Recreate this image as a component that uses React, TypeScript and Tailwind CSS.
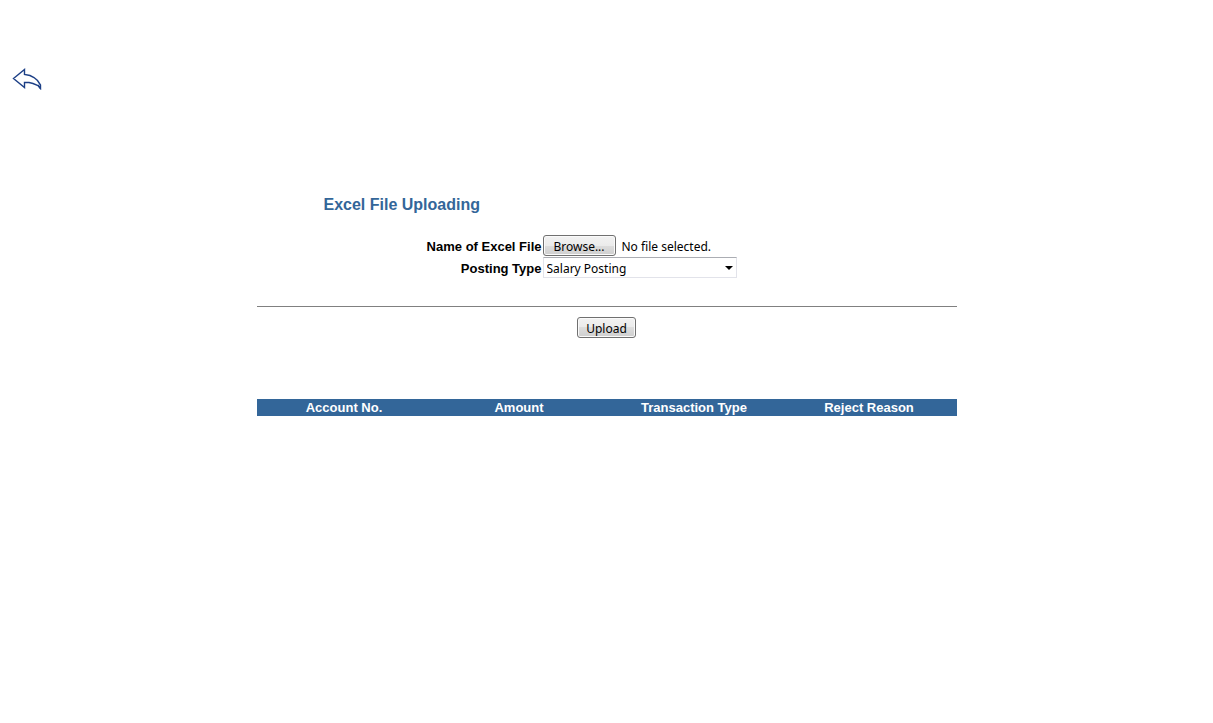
import { useRef, useState } from "react";

const columns = ["Account No.", "Amount", "Transaction Type", "Reject Reason"];

const buttonClass =
  "h-[21px] rounded-[3px] border border-[#707070] bg-[linear-gradient(#f2f2f2,#ebebeb_50%,#dddddd_50%,#cfcfcf)] font-['Noto_Sans',sans-serif] text-[12px] leading-[21px] text-black shadow-[inset_0_0_0_1px_#fafafa]";

const labelClass = "h-[22px] text-right leading-[24px] font-bold";

function BackIcon() {
  return (
    <svg
      width="30"
      height="22"
      viewBox="0 0 30 22"
      fill="none"
      stroke="#1c3f86"
      strokeWidth="1.4"
      aria-hidden="true"
    >
      <path d="M1.5 10.5 L12.5 1.5 V6.5 L18 7.5 L22 9.5 L25.5 12.5 L28.5 17 V20.5 L26 17.5 L21 15.5 L17 14.5 H12.5 V19.5 Z" />
      <path d="M26 17 L28.5 20.5" />
    </svg>
  );
}

export default function App() {
  const fileInput = useRef<HTMLInputElement>(null);
  const [fileName, setFileName] = useState("No file selected.");

  return (
    <div className="min-h-screen bg-white font-['Liberation_Sans',Arial,sans-serif] text-[13px] text-black">
      <header className="px-3 pt-17">
        <a href="#back" aria-label="Back" className="inline-block align-top">
          <BackIcon />
        </a>
      </header>

      <main className="mx-auto w-full max-w-[700px] pt-[103px]">
        <h1 className="pl-[67px] text-[16px] leading-6 font-bold text-[#336699]">
          Excel File Uploading
        </h1>

        <form onSubmit={(event) => event.preventDefault()}>
          <div className="mt-[18px] grid grid-cols-[285px_1fr] gap-x-px">
            <label htmlFor="excel-file" className={labelClass}>
              Name of Excel File
            </label>
            <div className="flex items-start gap-1.5">
              <input
                ref={fileInput}
                id="excel-file"
                type="file"
                accept=".xls,.xlsx"
                className="sr-only"
                onChange={(event) =>
                  setFileName(event.target.files?.[0]?.name ?? "No file selected.")
                }
              />
              <button
                type="button"
                className={`${buttonClass} w-[73px]`}
                onClick={() => fileInput.current?.click()}
              >
                Browse...
              </button>
              <span className="h-[22px] font-['Noto_Sans',sans-serif] text-[12px] leading-[24px]">
                {fileName}
              </span>
            </div>

            <label htmlFor="posting-type" className={labelClass}>
              Posting Type
            </label>
            <div className="grid w-[194px] items-start">
              <select
                id="posting-type"
                className="col-start-1 row-start-1 h-[21px] w-full appearance-none border border-[#e2e3ea] border-t-[#abadb3] bg-white pt-0.5 pl-[3px] font-['Noto_Sans',sans-serif] text-[12px] text-black"
              >
                <option>Salary Posting</option>
              </select>
              <svg
                width="8"
                height="4"
                viewBox="0 0 8 4"
                className="pointer-events-none col-start-1 row-start-1 mr-1 self-center justify-self-end"
                aria-hidden="true"
              >
                <path d="M0 0 H8 L4 4 Z" fill="#000" />
              </svg>
            </div>
          </div>

          <hr className="mt-[27px] border-t border-[#808080]" />

          <div className="mt-2.5 flex justify-center">
            <button type="submit" className={`${buttonClass} w-[59px]`}>
              Upload
            </button>
          </div>
        </form>

        <table className="mt-[61px] w-full table-fixed border-collapse bg-[#336699] text-white">
          <thead>
            <tr>
              {columns.map((column) => (
                <th key={column} scope="col" className="p-0 pt-px text-center leading-[16px] font-bold">
                  {column}
                </th>
              ))}
            </tr>
          </thead>
        </table>
      </main>
    </div>
  );
}
